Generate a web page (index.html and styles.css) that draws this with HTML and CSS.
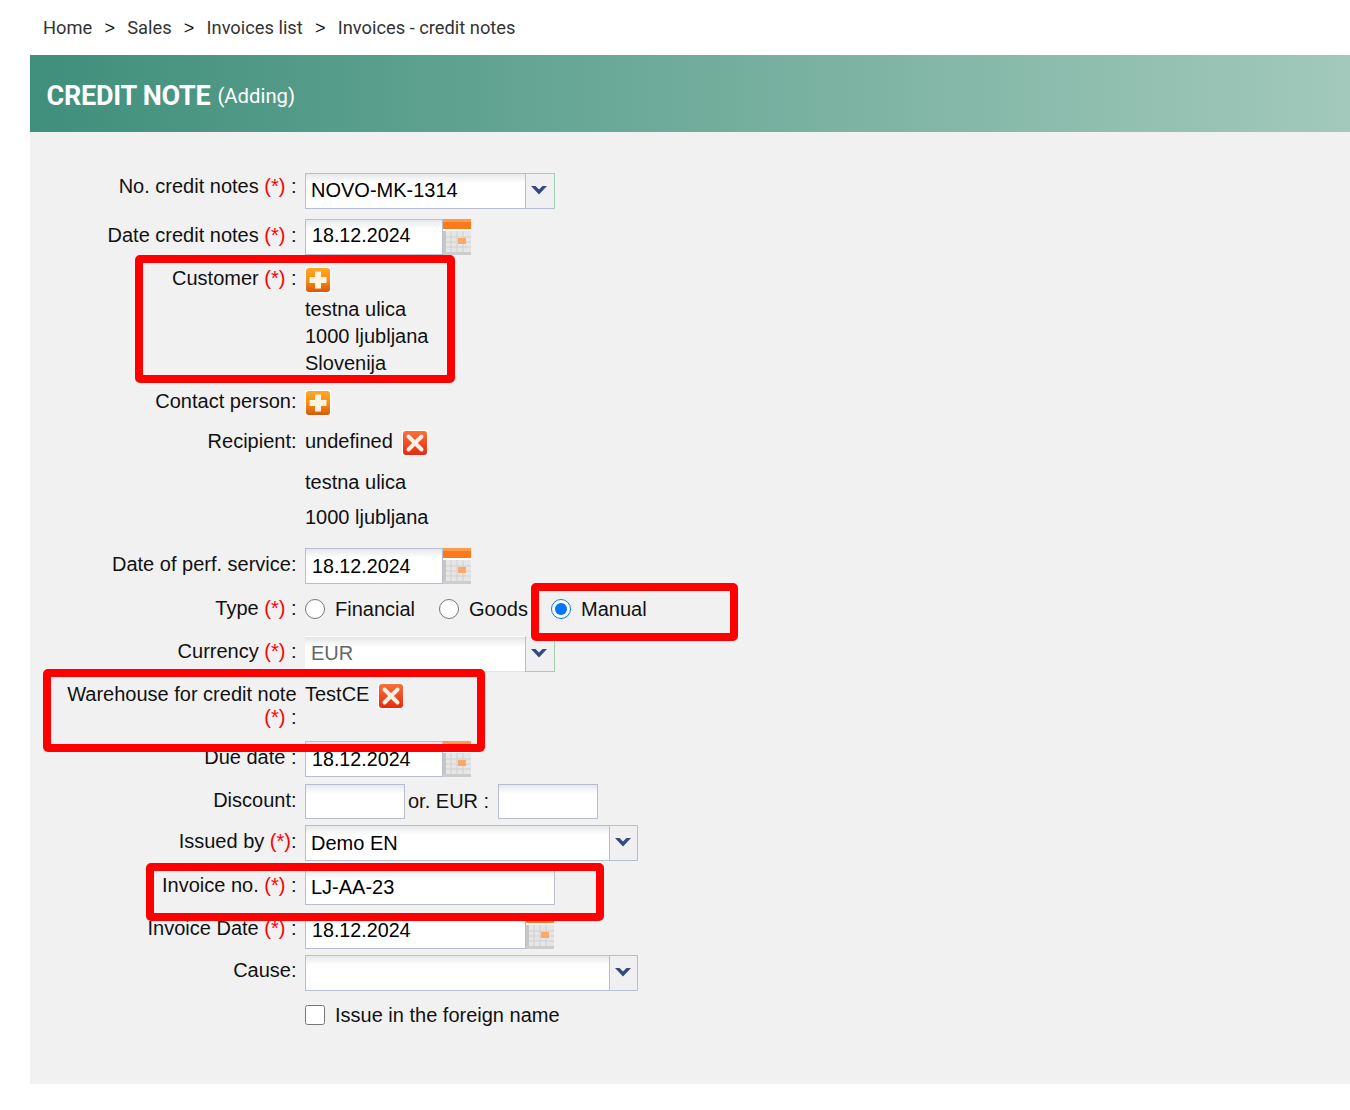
FILE: index.html
```html
<!DOCTYPE html>
<html lang="en">
<head>
<meta charset="utf-8">
<title>Credit note</title>
<link rel="stylesheet" href="styles.css">
</head>
<body>
<svg class="defs" width="0" height="0" aria-hidden="true">
  <defs>
    <linearGradient id="gAdd" x1="0" y1="0" x2="0" y2="1"><stop offset="0" stop-color="#ffa824"/><stop offset="0.55" stop-color="#f58a14"/><stop offset="1" stop-color="#d9560a"/></linearGradient>
    <linearGradient id="gDel" x1="0" y1="0" x2="0" y2="1"><stop offset="0" stop-color="#f9703a"/><stop offset="1" stop-color="#e62a10"/></linearGradient>
    <symbol id="add" viewBox="0 0 26 26"><rect width="26" height="26" fill="#fff"/><rect x="1" y="1" width="24" height="24" rx="3" fill="url(#gAdd)"/><path d="M10 4.500h6V10h5.500v6H16v5.500h-6V16H4.500v-6H10z" fill="#fff3e2"/></symbol>
    <symbol id="del" viewBox="0 0 26 26"><rect width="26" height="26" fill="#fff"/><rect x="1" y="1" width="24" height="24" rx="3" fill="url(#gDel)"/><path d="M6.500 6.500l13 13M19.500 6.500l-13 13" stroke="#fff0e6" stroke-width="4" stroke-linecap="round" fill="none"/></symbol>
    <symbol id="cal" viewBox="0 0 28 36"><rect width="28" height="10" fill="#fb7a1e"/><rect y="0" width="28" height="3" fill="#fd9a4c"/><rect y="10" width="28" height="2" fill="#fff"/><rect y="12" width="28" height="23" fill="#e6e6e6"/><rect y="12" width="3" height="24" fill="#c6c6c6"/><rect y="33" width="28" height="3" fill="#cdcdcd"/><path d="M3 18h25M3 23h25M3 28h25M8 12v21M14 12v21M20 12v21" stroke="#d0d0d0" stroke-width="1" fill="none"/><rect x="15" y="19" width="8" height="6" fill="#fba868"/></symbol>
    <symbol id="arrow" viewBox="0 0 16 10"><path d="M0 1h4.500L8 4.500 11.500 1H16L8 9.500z" fill="#34497f"/></symbol>
  </defs>
</svg>

<nav class="crumbs">
  <a>Home</a><span class="sep">&gt;</span><a>Sales</a><span class="sep">&gt;</span><a>Invoices list</a><span class="sep">&gt;</span><a>Invoices - credit notes</a>
</nav>

<main class="card">
  <header class="head"><h1>CREDIT NOTE</h1><span class="sub">(Adding)</span></header>
  <form class="panel">
    <div class="row h46"><label class="lab p2">No. credit notes <i>(*)</i> :</label>
      <div class="combo w250"><input class="inp fill up1" value="NOVO-MK-1314"><span class="drop"><svg class="arr"><use href="#arrow"/></svg></span></div></div>

    <div class="row h48"><label class="lab p5">Date credit notes <i>(*)</i> :</label>
      <div class="date"><input class="inp dt w138 up" value="18.12.2024"><svg class="cal"><use href="#cal"/></svg></div></div>

    <div class="row h123"><label class="lab">Customer <i>(*)</i> :</label>
      <div class="val">
        <div class="iconline"><svg class="ico"><use href="#add"/></svg></div>
        <div class="addr">testna ulica<br>1000 ljubljana<br>Slovenija</div>
      </div></div>

    <div class="row h40"><label class="lab">Contact person:</label>
      <div class="val"><div class="iconline"><svg class="ico"><use href="#add"/></svg></div></div></div>

    <div class="row h41"><label class="lab">Recipient:</label>
      <div class="val inline"><span>undefined</span><svg class="ico"><use href="#del"/></svg></div></div>
    <div class="row h35"><span class="lab"></span><div class="val">testna ulica</div></div>
    <div class="row h42"><span class="lab"></span><div class="val">1000 ljubljana</div></div>

    <div class="row h49"><label class="lab p5">Date of perf. service:</label>
      <div class="date"><input class="inp dt w138" value="18.12.2024"><svg class="cal"><use href="#cal"/></svg></div></div>

    <div class="row h39"><label class="lab">Type <i>(*)</i> :</label>
      <div class="radios">
        <label class="opt o1"><input type="radio" name="t">Financial</label>
        <label class="opt o2"><input type="radio" name="t">Goods</label>
        <label class="opt"><input type="radio" name="t" checked>Manual</label>
      </div></div>

    <div class="row h47"><label class="lab p4">Currency <i>(*)</i> :</label>
      <div class="combo w250 off"><input class="inp fill up1" value="EUR" disabled><span class="drop"><svg class="arr"><use href="#arrow"/></svg></span></div></div>

    <div class="row h58"><label class="lab">Warehouse for credit note <i>(*)</i> :</label>
      <div class="val inline"><span>TestCE</span><svg class="ico"><use href="#del"/></svg></div></div>

    <div class="row h43"><label class="lab p5">Due date :</label>
      <div class="date"><input class="inp dt w138" value="18.12.2024"><svg class="cal"><use href="#cal"/></svg></div></div>

    <div class="row h41"><label class="lab p5">Discount:</label>
      <div class="disc"><input class="inp w100"><span>or. EUR :</span><input class="inp w100"></div></div>

    <div class="row h44"><label class="lab p5">Issued by <i>(*)</i>:</label>
      <div class="combo w333"><input class="inp fill" value="Demo EN"><span class="drop"><svg class="arr"><use href="#arrow"/></svg></span></div></div>

    <div class="row h44"><label class="lab p5">Invoice no. <i>(*)</i> :</label>
      <input class="inp w250" value="LJ-AA-23"></div>

    <div class="row h42"><label class="lab p4">Invoice Date <i>(*)</i> :</label>
      <div class="date"><input class="inp dt w221 up1" value="18.12.2024"><svg class="cal"><use href="#cal"/></svg></div></div>

    <div class="row h48"><label class="lab p4">Cause:</label>
      <div class="combo w333"><input class="inp fill"><span class="drop"><svg class="arr"><use href="#arrow"/></svg></span></div></div>

    <div class="row h81"><span class="lab"></span>
      <label class="opt"><input type="checkbox">Issue in the foreign name</label></div>
  </form>
</main>

<div class="mark m1"></div>
<div class="mark m2"></div>
<div class="mark m3"></div>
<div class="mark m4"></div>
</body>
</html>
```
FILE: styles.css
```css
* { box-sizing: border-box; }
html, body { margin: 0; padding: 0; }
body {
  position: relative;
  height: 1110px;
  overflow: hidden;
  background: #fff;
  color: #111;
  font-family: "Liberation Sans", Arial, sans-serif;
  font-size: 20px;
}
.defs { position: absolute; }

.crumbs {
  height: 55px;
  padding: 17px 0 0 43px;
  display: flex;
  font-family: Roboto, sans-serif;
  font-size: 18.3px;
  line-height: 22px;
  color: #333;
}
.sep { width: 35px; text-align: center; color: #111; font-family: "Liberation Sans", sans-serif; font-size: 18px; }

.card { margin-left: 30px; }
.head {
  height: 77px;
  padding: 4px 0 0 16.500px;
  display: flex;
  align-items: center;
  gap: 7px;
  color: #fff;
  font-family: Roboto, sans-serif;
  background: linear-gradient(90deg, #3f8f7b, #a2c9bb);
}
.head h1 { margin: 0; font-size: 27px; font-weight: 700; letter-spacing: -0.25px; }
.sub { font-size: 20.3px; }

.panel { background: #f1f1f1; padding-top: 41px; }

.row { display: grid; grid-template-columns: 266.500px 1fr; column-gap: 8.500px; align-items: start; }
.h35 { height: 35px; } .h39 { height: 39px; } .h40 { height: 40px; } .h41 { height: 41px; }
.h42 { height: 42px; } .h43 { height: 43px; } .h44 { height: 44px; } .h46 { height: 46px; }
.h47 { height: 47px; } .h48 { height: 48px; } .h49 { height: 49px; } .h58 { height: 58px; }
.h81 { height: 81px; } .h123 { height: 123px; }

.lab { display: block; padding-left: 30px; text-align: right; line-height: 23px; }
.lab i { font-style: normal; color: #f00; }
.p2 { padding-top: 2px; } .p4 { padding-top: 4px; } .p5 { padding-top: 5px; }

.val { line-height: 23px; }
.iconline { height: 29px; }
.addr { line-height: 27px; }
.inline { display: flex; align-items: flex-start; gap: 9px; }
.ico { width: 26px; height: 26px; display: block; }

.inp {
  height: 36px;
  display: block;
  padding: 0 5px;
  border: 1px solid #b8bdd0;
  border-radius: 0;
  outline: none;
  background: linear-gradient(#e6e8ea, #fff 9px);
  color: #000;
  font-family: "Liberation Sans", Arial, sans-serif;
  font-size: 20px;
}
.inp.dt { padding-left: 6px; font-size: 19.700px; }
.inp.up { padding-bottom: 3px; }
.inp.up1 { padding-bottom: 1px; }
.inp:disabled { border-color: transparent; color: #666; background: linear-gradient(#e2e4e6, #fff 10px); }
.fill { flex: 1; min-width: 0; }
.w100 { width: 100px; } .w138 { width: 138px; } .w221 { width: 221px; } .w250 { width: 250px; }

.combo { display: flex; height: 36px; }
.combo.w250 { width: 250px; }
.w333 { width: 333px; }
.drop {
  width: 30px;
  flex: none;
  display: flex;
  justify-content: center;
  padding: 11px 2px 0 0;
  margin-left: -1px;
  border: 1px solid #b8bdd0;
  border-right: 1px solid #9ed2ac;
  background: #f0f0f2;
}
.w333 .drop { width: 29px; padding-right: 1px; }
.off .drop { border-top-color: transparent; }
.arr { width: 16px; height: 10px; display: block; }

.date { display: flex; }
.cal { width: 28px; height: 36px; display: block; flex: none; }

.radios { display: flex; }
.opt { display: flex; align-items: center; gap: 10px; line-height: 24px; }
.opt input { width: 20px; height: 20px; margin: 0; accent-color: #0075ff; }
.o1 { width: 134px; }
.o2 { width: 112px; }

.disc { display: flex; align-items: center; height: 35px; }
.disc .inp { height: 35px; }
.disc span { width: 93px; padding-left: 3px; }

.mark {
  position: absolute;
  border: 8px solid #f00;
  border-radius: 5px;
  pointer-events: none;
}
.m1 { left: 135px; top: 255px; width: 320px; height: 128px; }
.m2 { left: 531px; top: 583px; width: 207px; height: 58px; }
.m3 { left: 43px; top: 669px; width: 442px; height: 83px; }
.m4 { left: 146px; top: 863px; width: 458px; height: 58px; }
```
